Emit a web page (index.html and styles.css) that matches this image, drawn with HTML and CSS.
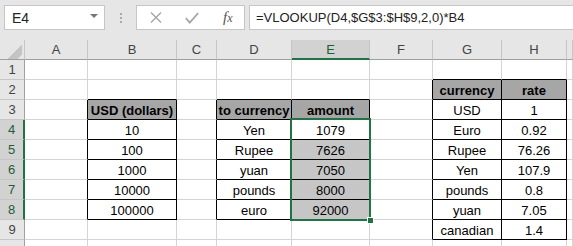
FILE: index.html
```html
<!DOCTYPE html>
<html lang="en">
<head>
    <meta charset="UTF-8">
    <title>Currency VLOOKUP</title>
    <link rel="stylesheet" href="styles.css">
</head>
<body>
    <!-- formula bar -->
    <div class="toolbar">
        <div class="namebox">
            <span>E4</span>
            <span class="drop"></span>
        </div>
        <div class="grip"><i></i><i></i><i></i></div>
        <div class="buttons">
            <svg width="12" height="11" viewBox="0 0 12 11"><path d="M1 0.5 L11 10.5 M11 0.5 L1 10.5" stroke="#a6a6a6" stroke-width="1.4" fill="none"/></svg>
            <svg width="14" height="12" viewBox="0 0 14 12"><path d="M0.8 6.2 L4.8 10.6 L13.2 1" stroke="#a6a6a6" stroke-width="1.8" fill="none"/></svg>
            <span class="fx"><i>f</i><i class="fx-x">x</i></span>
        </div>
        <div class="formula">=VLOOKUP(D4,$G$3:$H$9,2,0)*B4</div>
    </div>

    <!-- worksheet -->
    <div class="sheet">
        <div class="corner"></div>
        <div class="colhead">A</div>
        <div class="colhead">B</div>
        <div class="colhead">C</div>
        <div class="colhead">D</div>
        <div class="colhead active">E</div>
        <div class="colhead">F</div>
        <div class="colhead">G</div>
        <div class="colhead">H</div>
        <div class="colhead"></div>

        <div class="rowhead">1</div>
        <div class="cell"></div><div class="cell"></div><div class="cell"></div><div class="cell"></div><div class="cell"></div><div class="cell"></div>
        <div class="cell ab"></div><div class="cell ab"></div><div class="cell"></div>

        <div class="rowhead">2</div>
        <div class="cell"></div><div class="cell ab"></div><div class="cell"></div><div class="cell ab"></div><div class="cell ab"></div><div class="cell al"></div>
        <div class="cell tb hd">currency</div><div class="cell tb hd">rate</div><div class="cell"></div>

        <div class="rowhead">3</div>
        <div class="cell al"></div><div class="cell tb hd">USD (dollars)</div><div class="cell al"></div><div class="cell tb hd">to currency</div><div class="cell tb hd">amount</div><div class="cell al"></div>
        <div class="cell tb">USD</div><div class="cell tb">1</div><div class="cell"></div>

        <div class="rowhead sel">4</div>
        <div class="cell al"></div><div class="cell tb">10</div><div class="cell al"></div><div class="cell tb">Yen</div><div class="cell tb">1079</div><div class="cell al"></div>
        <div class="cell tb">Euro</div><div class="cell tb">0.92</div><div class="cell"></div>

        <div class="rowhead sel">5</div>
        <div class="cell al"></div><div class="cell tb">100</div><div class="cell al"></div><div class="cell tb">Rupee</div><div class="cell tb picked">7626</div><div class="cell al"></div>
        <div class="cell tb">Rupee</div><div class="cell tb">76.26</div><div class="cell"></div>

        <div class="rowhead sel">6</div>
        <div class="cell al"></div><div class="cell tb">1000</div><div class="cell al"></div><div class="cell tb">yuan</div><div class="cell tb picked">7050</div><div class="cell al"></div>
        <div class="cell tb">Yen</div><div class="cell tb">107.9</div><div class="cell"></div>

        <div class="rowhead sel">7</div>
        <div class="cell al"></div><div class="cell tb">10000</div><div class="cell al"></div><div class="cell tb">pounds</div><div class="cell tb picked">8000</div><div class="cell al"></div>
        <div class="cell tb">pounds</div><div class="cell tb">0.8</div><div class="cell"></div>

        <div class="rowhead sel">8</div>
        <div class="cell al"></div><div class="cell tb">100000</div><div class="cell al"></div><div class="cell tb">euro</div><div class="cell tb picked">92000</div><div class="cell al"></div>
        <div class="cell tb">yuan</div><div class="cell tb">7.05</div><div class="cell"></div>

        <div class="rowhead">9</div>
        <div class="cell"></div><div class="cell"></div><div class="cell"></div><div class="cell"></div><div class="cell"></div><div class="cell al"></div>
        <div class="cell tb">canadian</div><div class="cell tb">1.4</div><div class="cell"></div>

        <div class="rowhead"></div>
        <div class="cell"></div><div class="cell"></div><div class="cell"></div><div class="cell"></div><div class="cell"></div><div class="cell"></div>
        <div class="cell"></div><div class="cell"></div><div class="cell"></div>

        <!-- selected range E4:E8, drawn over the cells -->
        <div class="selection"><span class="handle"></span></div>
    </div>
</body>
</html>
```

FILE: styles.css
```css
body {
    margin: 0;
    width: 573px;
    height: 246px;
    overflow: hidden;
    background: #fff;
    font-family: "Liberation Sans", Arial, sans-serif;
    font-size: 13px;
    color: #000;
}

.toolbar {
    display: flex;
    align-items: flex-start;
    height: 40px;
    box-sizing: border-box;
    padding: 5px 0 0 4px;
    background: #e6e6e6;
}
.namebox {
    display: flex;
    align-items: center;
    justify-content: space-between;
    width: 101px;
    height: 25px;
    box-sizing: border-box;
    padding: 0 6px 0 7px;
    background: #fff;
    border: 1px solid #c6c6c6;
    font-size: 14px;
    color: #222;
}
.drop {
    width: 0;
    height: 0;
    border-left: 4px solid transparent;
    border-right: 4px solid transparent;
    border-top: 4px solid #777;
    margin-top: -4px;
}
.grip {
    width: 31px;
    height: 25px;
    display: flex;
    flex-direction: column;
    align-items: center;
    justify-content: center;
    gap: 2px;
}
.grip i {
    display: block;
    width: 2px;
    height: 2px;
    background: #aaa;
}
.buttons {
    display: flex;
    align-items: center;
    width: 109px;
    height: 25px;
    box-sizing: border-box;
    padding-left: 13px;
    gap: 23px;
    background: #fff;
    border: 1px solid #c6c6c6;
}
.fx {
    font-family: "Liberation Serif", serif;
    font-size: 15px;
    color: #555;
    margin-left: 1px;
}
.fx-x {
    font-size: 12px;
}
.formula {
    flex: 1;
    height: 25px;
    box-sizing: border-box;
    margin-left: 4px;
    margin-right: -2px;
    padding: 4px 0 0 6px;
    background: #fff;
    border: 1px solid #c6c6c6;
    font-size: 13px;
    color: #222;
}

.sheet {
    position: relative;
    display: grid;
    grid-template-columns: 25px 63px 89px 40px 75px 78px 63px 69px 65px 1fr;
    grid-auto-rows: 20px;
}
.sheet > div {
    box-sizing: border-box;
}
.corner {
    background: #e6e6e6 linear-gradient(135deg, transparent 62%, #c4c4c4 62%, #c4c4c4 88%, transparent 88%) no-repeat;
    background-size: 20px 18px;
    background-position: 2px 1px;
    border-right: 1px solid #c6c6c6;
    border-bottom: 1px solid #a0a0a0;
}
.colhead {
    background: #e6e6e6;
    border-right: 1px solid #c6c6c6;
    border-bottom: 1px solid #a0a0a0;
    text-align: center;
    line-height: 20px;
    color: #444;
}
.colhead.active {
    background: #d2d2d2;
    border-bottom: 2px solid #217346;
    color: #1f5e36;
}
.rowhead {
    background: #e6e6e6;
    border-right: 1px solid #a0a0a0;
    border-bottom: 1px solid #c6c6c6;
    text-align: center;
    line-height: 20px;
    color: #444;
}
.rowhead.sel {
    background: #d2d2d2;
    border-right: 2px solid #217346;
    color: #1f5e36;
}

.cell {
    border-right: 1px solid #d4d4d4;
    border-bottom: 1px solid #d4d4d4;
    text-align: center;
    line-height: 21px;
    white-space: nowrap;
    overflow: hidden;
}
.cell.tb {
    border-right-color: #000;
    border-bottom-color: #000;
}
.cell.ab {
    border-bottom-color: #000;
}
.cell.al {
    border-right-color: #000;
}
.cell.hd {
    background: #a6a6a6;
    font-weight: bold;
}
.cell.picked {
    background: #c6c6c6;
}

.selection {
    position: absolute;
    grid-column: 6 / 7;
    grid-row: 5 / 10;
    top: -2px;
    left: -2px;
    right: -1px;
    bottom: -1px;
    border: 2px solid #217346;
    pointer-events: none;
}
.handle {
    position: absolute;
    right: -5px;
    bottom: -5px;
    width: 5px;
    height: 5px;
    background: #217346;
    border: 1px solid #fff;
}
```
